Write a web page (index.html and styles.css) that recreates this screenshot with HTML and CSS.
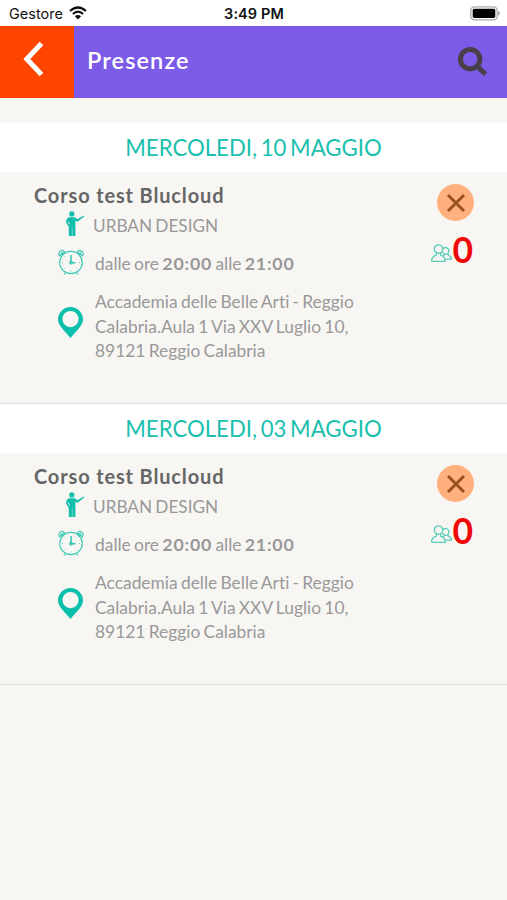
FILE: index.html
```html
<!DOCTYPE html>
<html lang="it">
    <head>
        <meta charset="UTF-8" />
        <meta name="viewport" content="width=device-width, initial-scale=1.0" />
        <title>Presenze</title>
        <link rel="stylesheet" href="styles.css">
    </head>
    <body>
        <!-- icone condivise -->
        <svg class="defs" width="0" height="0">
            <symbol id="trainer" viewBox="0 0 20 26">
                <circle cx="6.8" cy="2.9" r="2.6" />
                <path d="M3.5 6.2H10L12.4 8.2L18.8 4.6L19.2 5.4L12.6 10.8L10.4 9.8V25H7.3V16.5H6.9V25H3.8V16L1 11.5L1.5 8.5Z" />
                <path class="gap" d="M3.1 10.6L4.4 13.4" />
            </symbol>
            <symbol id="clock" viewBox="0 0 26 26">
                <circle cx="13" cy="13.5" r="11.2" />
                <path d="M1.6 6.8A3.2 3.2 0 1 1 6.6 2.8ZM24.4 6.8A3.2 3.2 0 1 0 19.4 2.8Z" />
                <path d="M3 3.5L5.5 6M23 3.5L20.5 6M7.5 23.5L6 25.5M18.5 23.5L20 25.5" />
                <path class="hands" d="M13 6V13.7H17.5" />
                <circle cx="13" cy="13.7" r="1.3" />
                <path class="ticks" d="M4 13.5H5M21 13.5H22M13 21.5V22.5M6.8 7.3L7.4 7.9M18.6 19.1L19.2 19.7M6.8 19.7L7.4 19.1" />
            </symbol>
            <symbol id="pin" viewBox="0 0 25 31">
                <path fill-rule="evenodd" d="M12.5 0A12.5 12.5 0 0 0 0 12.5C0 18.5 7 24 12.5 31C18 24 25 18.5 25 12.5A12.5 12.5 0 0 0 12.5 0ZM12.5 4A8.1 8.1 0 1 1 12.5 20.2A8.1 8.1 0 1 1 12.5 4Z" />
            </symbol>
            <symbol id="people" viewBox="0 0 21 18">
                <circle cx="7.5" cy="5" r="4.2" />
                <path d="M.6 17.3C.4 14 1.5 12.6 5.2 11.2C5.8 10.9 5.6 10 5.2 8.7M9.8 8.7C9.4 10 9.2 10.9 9.8 11.2C13 12.5 14.4 14 14.2 17.3H.6" />
                <path d="M11.8 5.2A3.3 3.3 0 1 1 13.2 9.9A3.3 3.3 0 0 1 11.5 7.5M17 9.7C17 11 17.2 11.2 18 11.6C20 12.4 20.6 13.3 20.5 15.2H14M13.4 10C13.3 11 13.1 11.3 12.3 11.8" />
            </symbol>
        </svg>

        <div class="status">
            <div class="carrier">
                <span>Gestore</span>
                <svg width="18" height="14" viewBox="0 0 18 14">
                    <path d="M1 5Q9 -2 17 5M3.9 8Q9 3.4 14.1 8" />
                    <path class="dot" d="M9 13.5L5.9 10.2Q9 7.6 12.1 10.2Z" />
                </svg>
            </div>
            <div class="time">3:49 PM</div>
            <div class="battery">
                <svg width="30" height="15" viewBox="0 0 30 15">
                    <rect x=".8" y=".8" width="26.4" height="13" rx="3.6" />
                    <rect class="level" x="2.7" y="2.7" width="22.6" height="9.2" rx="1.6" />
                    <path class="tip" d="M28.2 4.9Q30 5.5 30 7.3T28.2 9.7Z" />
                </svg>
            </div>
        </div>

        <header>
            <div class="back">
                <svg width="21" height="36" viewBox="0 0 21 36">
                    <path d="M18.5 2.5L3.8 18L18.5 33.5" />
                </svg>
            </div>
            <h1>Presenze</h1>
            <svg class="search" width="30" height="30" viewBox="0 0 30 30">
                <circle cx="12.2" cy="12.2" r="9.7" />
                <path d="M19 19L27.5 27.3" />
            </svg>
        </header>

        <main>
            <section>
                <h2>MERCOLEDI, 10 MAGGIO</h2>
                <div class="lesson">
                    <div class="info">
                        <h3>Corso test Blucloud</h3>
                        <div class="row subject">
                            <svg class="trainer"><use href="#trainer" /></svg>
                            <span>URBAN DESIGN</span>
                        </div>
                        <div class="row hours">
                            <svg class="clock"><use href="#clock" /></svg>
                            <span>dalle ore <b>20:00</b> alle <b>21:00</b></span>
                        </div>
                        <div class="row place">
                            <svg class="pin"><use href="#pin" /></svg>
                            <p>Accademia delle Belle Arti - Reggio<br>Calabria.Aula 1 Via XXV Luglio 10,<br>89121 Reggio Calabria</p>
                        </div>
                    </div>
                    <div class="side">
                        <div class="close">
                            <svg width="20" height="20" viewBox="0 0 20 20"><path d="M2 2L18 18M18 2L2 18" /></svg>
                        </div>
                        <div class="count">
                            <svg class="people"><use href="#people" /></svg>
                            <strong>0</strong>
                        </div>
                    </div>
                </div>
            </section>
            <section>
                <h2>MERCOLEDI, 03 MAGGIO</h2>
                <div class="lesson">
                    <div class="info">
                        <h3>Corso test Blucloud</h3>
                        <div class="row subject">
                            <svg class="trainer"><use href="#trainer" /></svg>
                            <span>URBAN DESIGN</span>
                        </div>
                        <div class="row hours">
                            <svg class="clock"><use href="#clock" /></svg>
                            <span>dalle ore <b>20:00</b> alle <b>21:00</b></span>
                        </div>
                        <div class="row place">
                            <svg class="pin"><use href="#pin" /></svg>
                            <p>Accademia delle Belle Arti - Reggio<br>Calabria.Aula 1 Via XXV Luglio 10,<br>89121 Reggio Calabria</p>
                        </div>
                    </div>
                    <div class="side">
                        <div class="close">
                            <svg width="20" height="20" viewBox="0 0 20 20"><path d="M2 2L18 18M18 2L2 18" /></svg>
                        </div>
                        <div class="count">
                            <svg class="people"><use href="#people" /></svg>
                            <strong>0</strong>
                        </div>
                    </div>
                </div>
            </section>
        </main>
    </body>
</html>
```
FILE: styles.css
```css
* {
    padding: 0;
    margin: 0;
    box-sizing: border-box;
}
body {
    min-height: 100vh;
    background-color: #f8f6f3;
    font-family: Lato, sans-serif;
    font-variant-ligatures: none;
    color: #999;
}
svg {
    display: block;
    flex: none;
}
.defs {
    height: 0;
}

/* status bar */
.status {
    display: flex;
    align-items: center;
    height: 26px;
    padding: 2px 7px 0 9px;
    background-color: #fff;
    color: #111;
    font-family: Inter, sans-serif;
    font-size: 14.5px;
}
.status span,
.time {
    margin-top: -1px;
}
.carrier,
.battery {
    display: flex;
    flex: 1;
    align-items: center;
}
.carrier {
    gap: 6px;
}
.carrier svg,
.battery svg {
    margin-top: -2px;
}
.carrier path {
    fill: none;
    stroke: #111;
    stroke-width: 2.2;
}
.carrier .dot {
    fill: #111;
    stroke: none;
}
.time {
    margin-left: -1px;
    font-weight: 600;
    letter-spacing: .1px;
}
.battery {
    justify-content: flex-end;
}
.battery rect {
    fill: none;
    stroke: #aaa;
    stroke-width: 1.3;
}
.battery .level {
    fill: #000;
    stroke: none;
}
.battery .tip {
    fill: #aaa;
}

/* header */
header {
    display: flex;
    align-items: center;
    height: 72px;
    padding-right: 19px;
    background-color: #7c5be8;
}
.back {
    display: flex;
    align-self: stretch;
    width: 74px;
    padding: 15px 0 0 23px;
    background-color: #ff4500;
}
.back path {
    fill: none;
    stroke: #fff;
    stroke-width: 5;
}
header h1 {
    flex: 1;
    padding: 0 0 4px 13px;
    color: #fff;
    font-size: 23.5px;
    font-weight: 600;
    letter-spacing: 1.1px;
}
.search {
    fill: none;
    stroke: #484048;
    stroke-width: 5;
}

/* list */
main {
    padding-top: 25px;
}
h2 {
    height: 49px;
    background-color: #fff;
    color: #1abfae;
    font-size: 22.2px;
    font-weight: 400;
    line-height: 50px;
    text-align: center;
    word-spacing: -2px;
}
.lesson {
    display: flex;
    justify-content: space-between;
    height: 232px;
    padding: 12px 33px 0 34px;
    border-bottom: 1px solid #dedede;
}
h3 {
    height: 24px;
    color: #666;
    font-size: 20px;
    font-weight: 700;
    line-height: 22px;
    letter-spacing: .85px;
}
.row {
    display: flex;
    align-items: center;
    padding-left: 24px;
    font-size: 17.4px;
    line-height: 24.5px;
    word-spacing: -1.2px;
}
.row span,
.row p {
    padding-top: 3px;
}
.subject {
    gap: 8px;
    height: 28px;
    padding: 4px 0 0 31px;
    font-size: 17.2px;
}
.subject span {
    padding-top: 5px;
}
.hours {
    gap: 11px;
    margin-top: 13px;
    height: 27px;
}
.hours b {
    font-size: 17.8px;
    letter-spacing: .8px;
}
.place {
    gap: 12px;
    margin-top: 11px;
}
.trainer {
    width: 20px;
    height: 26px;
    fill: #12bdab;
}
.gap {
    stroke: #f8f6f3;
}
.clock {
    width: 26px;
    height: 26px;
    margin-top: -2px;
    fill: none;
    stroke: #3cc8b4;
    stroke-width: 1.2;
}
.hands {
    stroke-width: 1.6;
}
.ticks {
    stroke-width: .8;
}
.pin {
    width: 25px;
    height: 31px;
    margin-top: -5px;
    fill: #0abfab;
}

/* right side */
.side {
    display: flex;
    flex-direction: column;
    align-items: flex-end;
}
.close {
    display: flex;
    align-items: center;
    justify-content: center;
    width: 37px;
    height: 37px;
    border-radius: 50%;
    background-color: #ffb07c;
}
.close path {
    stroke: #985320;
    stroke-width: 3;
}
.count {
    display: flex;
    align-items: center;
    margin: 9px 1px 0 0;
    height: 40px;
}
.count strong {
    color: #f00808;
    font-size: 35.5px;
    line-height: 40px;
}
.people {
    width: 21px;
    height: 18px;
    margin-top: 6px;
    fill: none;
    stroke: #5acbb9;
    stroke-width: 1.3;
}
```
